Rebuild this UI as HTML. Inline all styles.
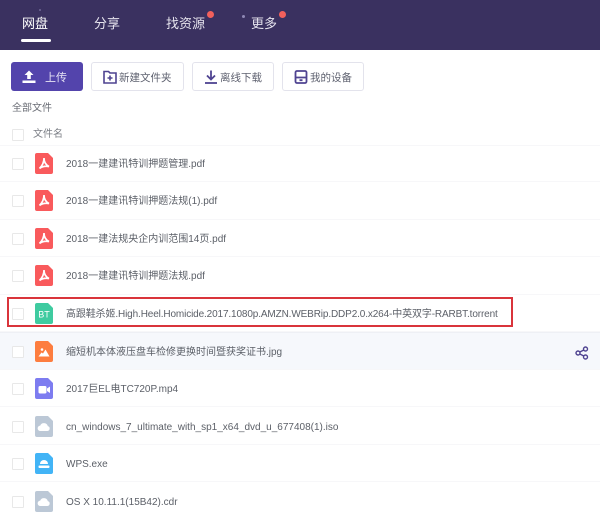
<!DOCTYPE html>
<html lang="zh"><head><meta charset="utf-8">
<style>
html,body{margin:0;padding:0}
body{width:600px;height:507px;overflow:hidden;position:relative;background:#fff;font-family:"Liberation Sans","Noto Sans CJK SC",sans-serif;color:#5c6068}
.a{position:absolute}
.hd{left:0;top:0;width:600px;height:50px;background:#3a3160}
.nav{position:absolute;top:15px;font-size:13px;line-height:18px;color:#e6e4ee;white-space:nowrap}
.dot{position:absolute;width:7px;height:7px;border-radius:50%;background:#f2605c}
.btn{position:absolute;top:62px;height:29px;box-sizing:border-box;border:1px solid #e3e3ec;border-radius:3px;background:#fff;font-size:10.5px;line-height:27px;color:#5f6270;white-space:nowrap}
.btn svg{position:absolute;top:6px}
.btn span{position:absolute;top:1.5px}
.cb{position:absolute;left:12px;width:10px;height:10px;border:1px solid #e8e8e8;border-radius:1px;background:#fff;margin-top:.5px}
.row{position:absolute;left:0;width:600px;height:37.5px;border-bottom:1px solid #f7f7f9;box-sizing:border-box}
.nm{position:absolute;left:66px;font-size:10px;line-height:14px;color:#5c6068;white-space:nowrap;margin-top:1.5px}
.ic{position:absolute;left:35px;width:18px;height:21px}
</style></head><body>
<div class="a hd"></div>
<div class="nav" style="left:22px;color:#fff">网盘</div>
<div class="a" style="left:21px;top:39px;width:30px;height:3px;background:#fff;border-radius:2px"></div>
<div class="nav" style="left:94px">分享</div>
<div class="nav" style="left:166px">找资源</div>
<div class="dot" style="left:207px;top:11px"></div>
<div class="nav" style="left:251px">更多</div>
<div class="dot" style="left:279px;top:11px"></div>
<div class="a" style="left:242px;top:15px;width:3px;height:3px;border-radius:50%;background:#8f88b5"></div>
<div class="a" style="left:39px;top:9px;width:2px;height:2px;border-radius:50%;background:#6f6895"></div>

<div class="a" style="left:11px;top:62px;width:72px;height:29px;border-radius:3px;background:#5344ac"></div>
<svg class="a" style="left:22px;top:70px" width="14" height="14" viewBox="0 0 14 14"><path d="M7 0.5L11.5 5H8.8V9H5.2V5H2.5Z M0.5 10.5H13.5V13H0.5Z" fill="#fff"/></svg>
<div class="a" style="left:45px;top:69.5px;font-size:11px;line-height:16px;color:#e6e3f4">上传</div>

<div class="btn" style="left:91px;width:93px"><svg style="left:10px" width="16" height="16" viewBox="0 0 16 16" fill="none" stroke="#4f4391" stroke-width="1.6"><path d="M2 2.5H6.5L8 4H14V14H2Z"/><path d="M8 6.5V11.5M5.5 9H10.5"/></svg><span style="left:27px">新建文件夹</span></div>
<div class="btn" style="left:192px;width:82px"><svg style="left:10px" width="16" height="16" viewBox="0 0 16 16" fill="none" stroke="#4f4391" stroke-width="1.8"><path d="M8 1.5V10M4 6.5L8 10.5L12 6.5"/><path d="M2 14H14"/></svg><span style="left:27px">离线下载</span></div>
<div class="btn" style="left:282px;width:82px"><svg style="left:10px" width="16" height="16" viewBox="0 0 16 16" fill="none" stroke="#4f4391" stroke-width="1.8"><rect x="2.5" y="2" width="11" height="12" rx="1.5"/><path d="M2.5 8.5H13.5M6.5 11.2H9.5"/></svg><span style="left:27px">我的设备</span></div>

<div class="a" style="left:12px;top:102px;font-size:10px;line-height:14px;color:#6a6d75">全部文件</div>
<div class="cb" style="top:128.5px"></div>
<div class="a" style="left:33px;top:127.5px;font-size:10px;line-height:14px;color:#7d8087">文件名</div>

<div class="row" style="top:145px;height:37px;border-top:1px solid #f7f7f9"></div>
<div class="row" style="top:182px"></div>
<div class="row" style="top:219.5px"></div>
<div class="row" style="top:257px"></div>
<div class="row" style="top:294.5px"></div>
<div class="row" style="top:332px;background:#f6f8fc;border-top:1px solid #eef0f5"></div>
<div class="row" style="top:369.5px"></div>
<div class="row" style="top:407px"></div>
<div class="row" style="top:444.5px"></div>

<div class="cb" style="top:157px"></div><div class="cb" style="top:194px"></div><div class="cb" style="top:232px"></div><div class="cb" style="top:269px"></div><div class="cb" style="top:307px"></div><div class="cb" style="top:345px"></div><div class="cb" style="top:382px"></div><div class="cb" style="top:420px"></div><div class="cb" style="top:457px"></div><div class="cb" style="top:495px"></div>

<svg width="0" height="0" style="position:absolute"><defs>
<path id="pdfg" d="M9 5C9 9 8 12 4.5 15.5M9 5C9 9 11 12 14 13.5C11 13 7 13.5 4.5 15.5" fill="none" stroke="#fff" stroke-width="1.7"/>
</defs></svg>

<svg class="ic" style="top:153px" viewBox="0 0 18 21"><path d="M2 0H13L18 5V19a2 2 0 0 1-2 2H2a2 2 0 0 1-2-2V2a2 2 0 0 1 2-2Z" fill="#f95a5c"/><use href="#pdfg"/></svg>
<svg class="ic" style="top:190px" viewBox="0 0 18 21"><path d="M2 0H13L18 5V19a2 2 0 0 1-2 2H2a2 2 0 0 1-2-2V2a2 2 0 0 1 2-2Z" fill="#f95a5c"/><use href="#pdfg"/></svg>
<svg class="ic" style="top:228px" viewBox="0 0 18 21"><path d="M2 0H13L18 5V19a2 2 0 0 1-2 2H2a2 2 0 0 1-2-2V2a2 2 0 0 1 2-2Z" fill="#f95a5c"/><use href="#pdfg"/></svg>
<svg class="ic" style="top:265px" viewBox="0 0 18 21"><path d="M2 0H13L18 5V19a2 2 0 0 1-2 2H2a2 2 0 0 1-2-2V2a2 2 0 0 1 2-2Z" fill="#f95a5c"/><use href="#pdfg"/></svg>
<svg class="ic" style="top:303px" viewBox="0 0 18 21"><path d="M2 0H13L18 5V19a2 2 0 0 1-2 2H2a2 2 0 0 1-2-2V2a2 2 0 0 1 2-2Z" fill="#3fcba0"/><text x="9" y="14.5" font-size="9" fill="#fff" text-anchor="middle" font-family="Liberation Sans, sans-serif">BT</text></svg>
<svg class="ic" style="top:341px" viewBox="0 0 18 21"><path d="M2 0H13L18 5V19a2 2 0 0 1-2 2H2a2 2 0 0 1-2-2V2a2 2 0 0 1 2-2Z" fill="#fd7d3f"/><path d="M3.5 15.5L6.5 11.5L8 12.5L10.5 8.5L14.5 15.5Z" fill="#fff"/><circle cx="7" cy="8.5" r="1.3" fill="#fff"/></svg>
<svg class="ic" style="top:378px" viewBox="0 0 18 21"><path d="M2 0H13L18 5V19a2 2 0 0 1-2 2H2a2 2 0 0 1-2-2V2a2 2 0 0 1 2-2Z" fill="#7d7cf0"/><rect x="3.5" y="8" width="8" height="7.5" rx="1.5" fill="#fff"/><path d="M12 10.5L15 8.5V15L12 13Z" fill="#fff"/></svg>
<svg class="ic" style="top:416px" viewBox="0 0 18 21"><path d="M2 0H13L18 5V19a2 2 0 0 1-2 2H2a2 2 0 0 1-2-2V2a2 2 0 0 1 2-2Z" fill="#bcc8d6"/><path d="M5.5 15a2.7 2.7 0 0 1-.3-5.4a4 4 0 0 1 7.6 0.5a2.5 2.5 0 0 1-.3 4.9Z" fill="#fff"/></svg>
<svg class="ic" style="top:453px" viewBox="0 0 18 21"><path d="M2 0H13L18 5V19a2 2 0 0 1-2 2H2a2 2 0 0 1-2-2V2a2 2 0 0 1 2-2Z" fill="#42b4f6"/><path d="M5 11a4 4 0 0 1 8 0Z" fill="#fff"/><rect x="3.5" y="12.5" width="11" height="2.5" rx="1" fill="#fff"/></svg>
<svg class="ic" style="top:491px" viewBox="0 0 18 21"><path d="M2 0H13L18 5V19a2 2 0 0 1-2 2H2a2 2 0 0 1-2-2V2a2 2 0 0 1 2-2Z" fill="#bcc8d6"/><path d="M5.5 15a2.7 2.7 0 0 1-.3-5.4a4 4 0 0 1 7.6 0.5a2.5 2.5 0 0 1-.3 4.9Z" fill="#fff"/></svg>

<div class="nm" style="top:156px">2018一建建讯特训押题管理.pdf</div>
<div class="nm" style="top:193px">2018一建建讯特训押题法规(1).pdf</div>
<div class="nm" style="top:231px">2018一建法规央企内训范围14页.pdf</div>
<div class="nm" style="top:268px">2018一建建讯特训押题法规.pdf</div>
<div class="nm" style="top:306px;letter-spacing:-0.13px">高跟鞋杀姬.High.Heel.Homicide.2017.1080p.AMZN.WEBRip.DDP2.0.x264-中英双字-RARBT.torrent</div>
<div class="nm" style="top:344px">缩短机本体液压盘车检修更换时间暨获奖证书.jpg</div>
<div class="nm" style="top:381px">2017巨EL电TC720P.mp4</div>
<div class="nm" style="top:419px">cn_windows_7_ultimate_with_sp1_x64_dvd_u_677408(1).iso</div>
<div class="nm" style="top:456px">WPS.exe</div>
<div class="nm" style="top:494px">OS X 10.11.1(15B42).cdr</div>

<div class="a" style="left:7px;top:296.5px;width:502px;height:26px;border:2px solid #d9343b"></div>

<svg class="a" style="left:575px;top:346px" width="14" height="14" viewBox="0 0 14 14" fill="none" stroke="#4f4391" stroke-width="1.4"><circle cx="3" cy="7" r="2"/><circle cx="10.5" cy="3" r="2"/><circle cx="10.5" cy="11" r="2"/><path d="M4.8 6L8.8 4M4.8 8L8.8 10"/></svg>
</body></html>
